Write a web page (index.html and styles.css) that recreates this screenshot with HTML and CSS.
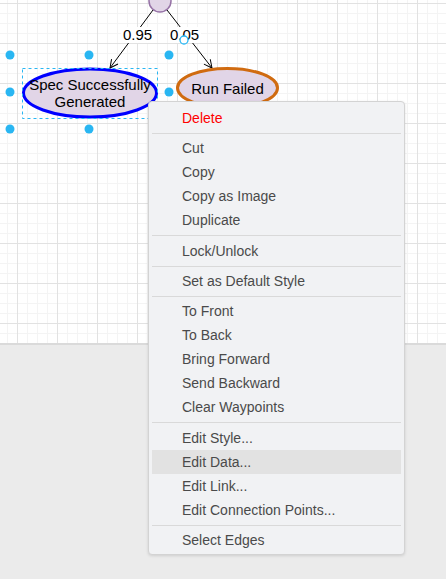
FILE: index.html
```html
<!DOCTYPE html>
<html>
<head>
<meta charset="utf-8">
<link rel="stylesheet" href="styles.css">
</head>
<body>
<div class="page">
  <div class="canvas">
    <svg class="diagram" width="446" height="343" viewBox="0 0 446 343">
      <defs>
        <marker id="arr" markerWidth="10" markerHeight="10" refX="9" refY="5" orient="auto" markerUnits="userSpaceOnUse">
          <path d="M1 1 L9 5 L1 9" fill="none" stroke="#000" stroke-width="1"/>
        </marker>
      </defs>
      <circle cx="160" cy="1" r="11" fill="#e1d5e7" stroke="#9673a6" stroke-width="1.5"/>
      <line x1="153" y1="10" x2="110" y2="68" stroke="#000" stroke-width="1" marker-end="url(#arr)"/>
      <line x1="167" y1="10" x2="212" y2="68" stroke="#000" stroke-width="1" marker-end="url(#arr)"/>
      <rect x="121" y="27" width="33" height="16" fill="#fff"/>
      <text x="137.5" y="40" class="lbl" text-anchor="middle">0.95</text>
      <rect x="168" y="27" width="33" height="16" fill="#fff"/>
      <text x="184.5" y="40" class="lbl" text-anchor="middle">0.05</text>
      <circle cx="184" cy="40" r="4" fill="#fff" stroke="#29b6f2" stroke-width="1.3"/>
      <ellipse cx="90" cy="93" rx="66.5" ry="24" fill="#e1d5e7" stroke="#0000ff" stroke-width="3"/>
      <text x="90" y="90" class="lbl" text-anchor="middle">Spec Successfully</text>
      <text x="90" y="107" class="lbl" text-anchor="middle">Generated</text>
      <rect x="22.5" y="68.5" width="135" height="50" fill="none" stroke="#29b6f2" stroke-width="1" stroke-dasharray="3 3"/>
      <ellipse cx="227.5" cy="88" rx="50" ry="19.5" fill="#e1d5e7" stroke="#d06b10" stroke-width="3"/>
      <text x="227.5" y="93.5" class="lbl" text-anchor="middle">Run Failed</text>
      <g fill="#29b6f2">
        <circle cx="10" cy="55" r="4.5"/>
        <circle cx="89" cy="55" r="4.5"/>
        <circle cx="169" cy="55" r="4.5"/>
        <circle cx="10" cy="92" r="4.5"/>
        <circle cx="169" cy="92" r="4.5"/>
        <circle cx="10" cy="129" r="4.5"/>
        <circle cx="89" cy="129" r="4.5"/>
        <circle cx="169" cy="129" r="4.5"/>
      </g>
    </svg>
  </div>
  <div class="below"></div>
  <div class="menu">
    <div class="item danger">Delete</div>
    <div class="sep"></div>
    <div class="item">Cut</div>
    <div class="item">Copy</div>
    <div class="item">Copy as Image</div>
    <div class="item">Duplicate</div>
    <div class="sep"></div>
    <div class="item">Lock/Unlock</div>
    <div class="sep"></div>
    <div class="item">Set as Default Style</div>
    <div class="sep"></div>
    <div class="item">To Front</div>
    <div class="item">To Back</div>
    <div class="item">Bring Forward</div>
    <div class="item">Send Backward</div>
    <div class="item">Clear Waypoints</div>
    <div class="sep"></div>
    <div class="item">Edit Style...</div>
    <div class="item active">Edit Data...</div>
    <div class="item">Edit Link...</div>
    <div class="item">Edit Connection Points...</div>
    <div class="sep"></div>
    <div class="item">Select Edges</div>
  </div>
</div>
</body>
</html>
```

FILE: styles.css
```css
html, body {
  margin: 0;
  padding: 0;
  background: #ebebeb;
  font-family: "Liberation Sans", Arial, sans-serif;
}
.page {
  position: relative;
  width: 446px;
  height: 579px;
  overflow: hidden;
  display: flex;
  flex-direction: column;
}
.canvas {
  height: 343px;
  flex: none;
  background-color: #ffffff;
  background-image:
    linear-gradient(to right, #e2e2e2 1px, transparent 1px),
    linear-gradient(to bottom, #e2e2e2 1px, transparent 1px),
    linear-gradient(to right, #f4f4f4 1px, transparent 1px),
    linear-gradient(to bottom, #f4f4f4 1px, transparent 1px);
  background-size: 40px 40px, 40px 40px, 10px 10px, 10px 10px;
  background-position: 17px 3px, 17px 3px, 7px 3px, 7px 3px;
  border-bottom: 2px solid #dadada;
}
.diagram {
  display: block;
}
.lbl {
  font-family: "Liberation Sans", Arial, sans-serif;
  font-size: 15px;
  fill: #000;
}
.below {
  flex: 1;
  background: #ebebeb;
}
.menu {
  position: absolute;
  left: 148px;
  top: 101px;
  width: 249px;
  padding: 4px 3px 2px 3px;
  background: #f1f2f4;
  border: 1px solid #d3d3d3;
  border-radius: 4px;
  box-shadow: 0 1px 3px rgba(0, 0, 0, 0.12);
}
.item {
  height: 24px;
  line-height: 24px;
  padding-left: 30px;
  font-size: 14px;
  color: #4a4a4a;
  white-space: nowrap;
}
.item.danger {
  color: #ff0000;
}
.item.active {
  background: #e2e2e2;
}
.sep {
  height: 1px;
  background: #d9d9d9;
  margin: 3px 0 2.33px 0;
}
```
